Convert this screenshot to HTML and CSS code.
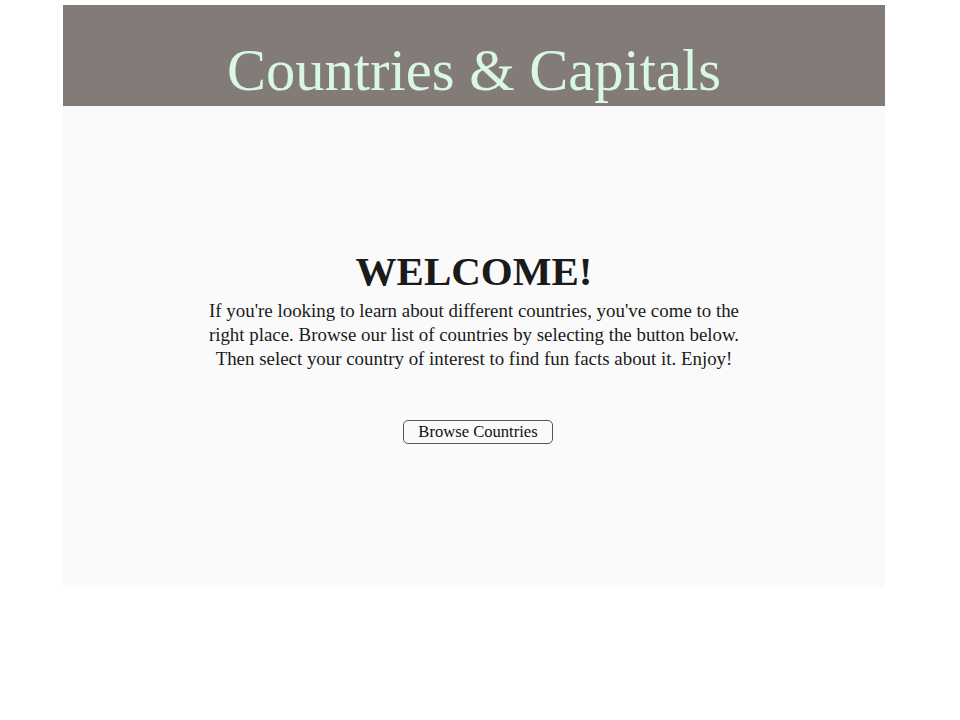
FILE: index.html
```html
<!DOCTYPE html>
<html>
<head>
<meta charset="utf-8">
<link rel="stylesheet" href="styles.css">
</head>
<body>
<div class="page">
  <header class="header">
    <h1 class="title">Countries &amp; Capitals</h1>
  </header>
  <main class="main">
    <div class="content">
      <h2 class="welcome">WELCOME!</h2>
      <p class="intro">If you're looking to learn about different countries, you've come to the right place. Browse our list of countries by selecting the button below. Then select your country of interest to find fun facts about it. Enjoy!</p>
      <button class="browse">Browse Countries</button>
    </div>
  </main>
</div>
</body>
</html>
```
FILE: styles.css
```css
html, body {
  margin: 0;
  padding: 0;
  background: #ffffff;
}
body {
  font-family: "Liberation Serif", "Times New Roman", serif;
}
.page {
  width: 822px;
  margin: 5px 0 0 63px;
}
.header {
  background: #827b78;
  height: 101px;
  display: flex;
  justify-content: center;
  align-items: flex-end;
  overflow: hidden;
}
.title {
  margin: 0 0 6px 0;
  font-weight: normal;
  font-size: 58.5px;
  line-height: 1;
  color: #d8f7e4;
}
.main {
  background: #fafafa;
  height: 481px;
  display: flex;
  align-items: center;
  justify-content: center;
}
.content {
  width: 560px;
  text-align: center;
  color: #1a1a1a;
}
.welcome {
  margin: 0 0 6px 0;
  font-size: 41px;
  font-weight: bold;
  line-height: 44px;
}
.intro {
  margin: 0;
  font-size: 18.9px;
  line-height: 24px;
}
.browse {
  margin: 49px 0 0 8px;
  font-family: "Liberation Serif", "Times New Roman", serif;
  font-size: 16.6px;
  color: #111;
  background: #fafafa;
  border: 1.5px solid #555;
  border-radius: 5px;
  padding: 1px 14px;
  height: 24px;
}
```
